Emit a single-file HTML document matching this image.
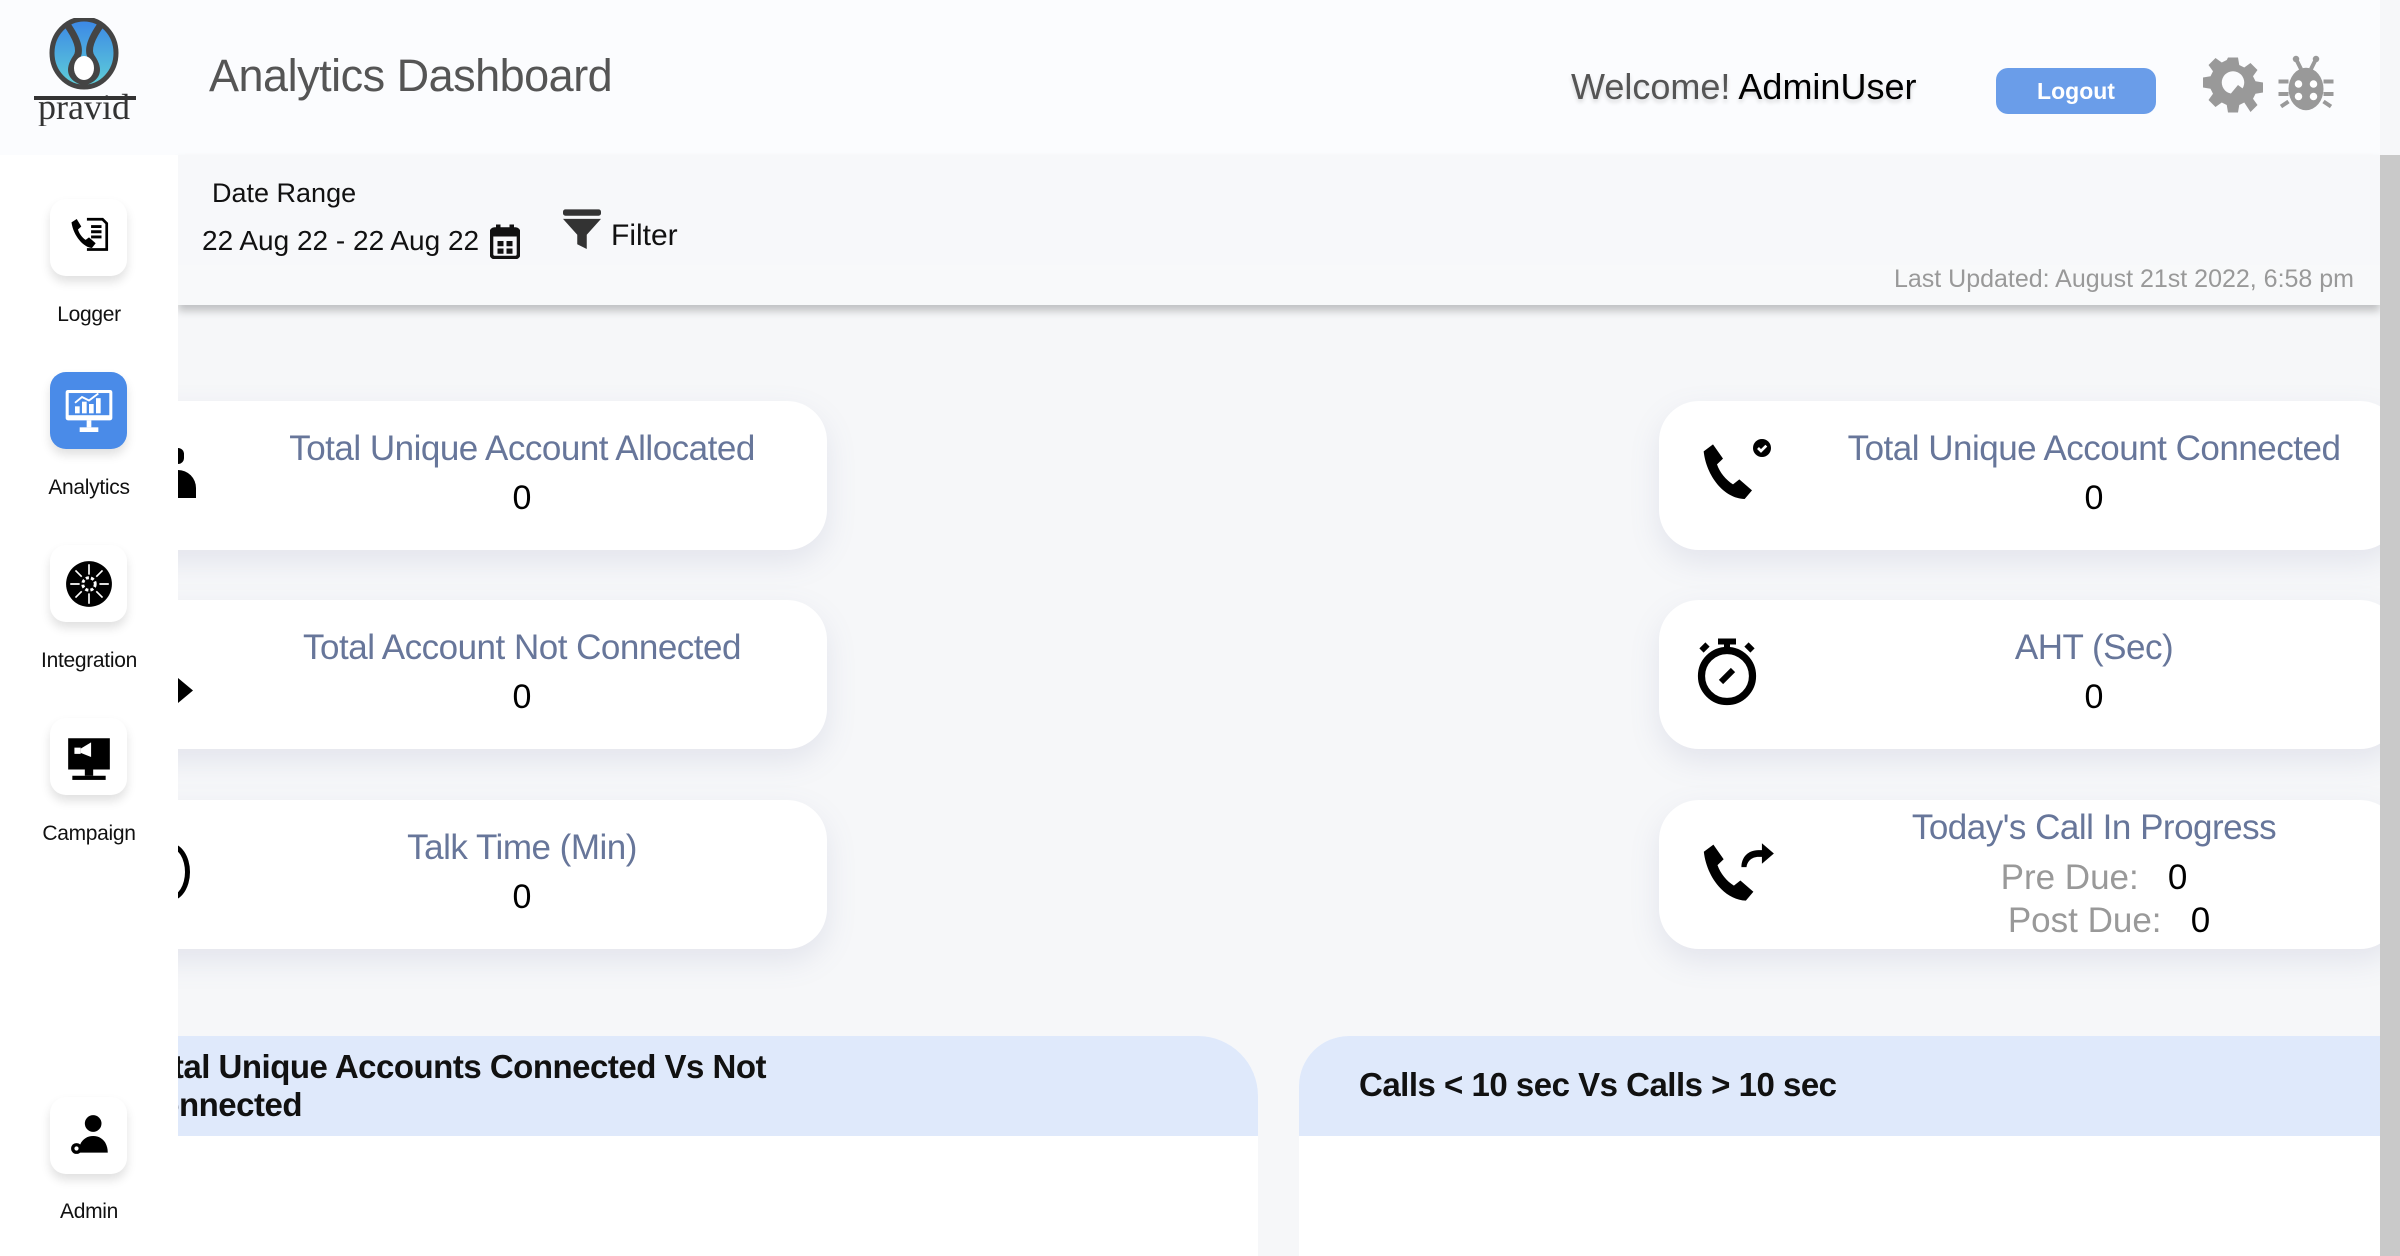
<!DOCTYPE html>
<html style="overflow:hidden"><head><meta charset="utf-8">
<style>
*{box-sizing:border-box;margin:0;padding:0}
html,body{width:2400px;height:1256px;overflow:hidden}
body{background:#f6f7f9;font-family:"Liberation Sans",Arial,sans-serif;position:relative}
.abs{position:absolute}
#hdr{left:0;top:0;width:2380px;height:155px;background:#fbfcfe}
#sb{left:0;top:155px;width:178px;height:1101px;background:#fff;z-index:5}
#scroll{left:2380px;top:155px;width:20px;height:1101px;background:#c9c9c9;z-index:6}
#filt{left:178px;top:155px;width:2202px;height:150px;background:#f8f9fa;box-shadow:0 6px 8px rgba(0,0,0,.22);z-index:3}
.card{background:#fff;border-radius:40px;box-shadow:0 12px 30px rgba(120,130,170,.15);height:149px}
.ct{color:#67769a;font-size:35px;text-align:center;letter-spacing:-.5px}
.cv{color:#000;font-size:34px;text-align:center;margin-top:10px}
.box{left:50px;width:77px;height:77px;border-radius:16px;background:#fff;box-shadow:0 6px 10px rgba(0,0,0,.12);display:flex;align-items:center;justify-content:center}
.lbl{left:0;width:178px;text-align:center;font-size:21px;color:#111;letter-spacing:-.3px}
.panel{background:#fff;border-radius:0 60px 0 0;overflow:hidden}
.ph{background:#dfe9fb;height:100px;font-weight:bold;font-size:33px;color:#111;letter-spacing:-.5px}
</style></head><body>
<div id="hdr" class="abs"></div>
<svg class="abs" style="left:26px;top:18px" width="120" height="108" viewBox="0 0 120 108">
<defs><linearGradient id="g" x1="0" y1="0" x2="0" y2="1"><stop offset="0" stop-color="#3b86e6"/><stop offset="1" stop-color="#5fd0d8"/></linearGradient></defs>
<ellipse cx="58" cy="35" rx="32" ry="34" fill="url(#g)" stroke="#444" stroke-width="5"/>
<path d="M40 5 Q58 30 50 40 Q38 58 58 64 Q78 58 66 40 Q58 30 76 5" fill="none" stroke="#444" stroke-width="7"/>
<ellipse cx="58" cy="50" rx="10" ry="12" fill="#fff"/>
<text x="58" y="101" text-anchor="middle" font-family="Liberation Serif,serif" font-size="36" fill="#333">pravid</text>
<line x1="8" y1="80" x2="110" y2="80" stroke="#333" stroke-width="4"/>
</svg>
<div class="abs" style="left:209px;top:50px;font-size:45px;color:#555;letter-spacing:-.5px">Analytics Dashboard</div>
<div class="abs" style="left:1571px;top:66px;font-size:36px;color:#555;text-shadow:0 3px 4px rgba(0,0,0,.15)">Welcome! <span style="color:#000">AdminUser</span></div>
<div class="abs" style="left:1996px;top:68px;width:160px;height:46px;border-radius:12px;background:#6a9de9;color:#fff;font-weight:bold;font-size:23px;text-align:center;line-height:46px">Logout</div>
<svg class="abs" style="left:2203px;top:55px" width="60" height="60" viewBox="0 0 24 24"><path fill="#999" d="M10 1h4l.5 3 2 1 2.5-1.8 2.8 2.8L20 8.5l1 2 3 .5v4l-3 .5-1 2 1.8 2.5-2.8 2.8L16.5 19l-2 1-.5 3h-4l-.5-3-2-1L5 20.8 2.2 18 4 15.5l-1-2L0 13V9l3-.5 1-2L2.2 4 5 1.2 7.5 3l2-1z"/><circle cx="12" cy="11" r="4.5" fill="#fbfcfe"/><path d="M9 18l5-6 2 1.5-5 6z" fill="#999"/></svg>
<svg class="abs" style="left:2276px;top:54px" width="60" height="60" viewBox="0 0 24 24"><circle cx="8" cy="2" r="1.3" fill="#999"/><circle cx="16" cy="2" r="1.3" fill="#999"/><path d="M8 2l2 4M16 2l-2 4M1 11h4M19 11h4M1 16h4M19 16h4M2 21l3-2M22 21l-3-2" stroke="#999" stroke-width="1.6"/><ellipse cx="12" cy="14" rx="7" ry="8.5" fill="#999"/><circle cx="9" cy="12" r="1.5" fill="#fff"/><circle cx="15" cy="12" r="1.5" fill="#fff"/><circle cx="9" cy="17" r="1.5" fill="#fff"/><circle cx="15" cy="17" r="1.5" fill="#fff"/></svg>

<div id="sb" class="abs"></div>
<div id="scroll" class="abs"></div>
<div id="filt" class="abs">
<div class="abs" style="left:0;top:0;width:2202px;height:110px;background:#f7f8fa"></div>
<div class="abs" style="left:34px;top:23px;font-size:27px;color:#111">Date Range</div>
<div class="abs" style="left:24px;top:70px;font-size:28px;color:#111">22 Aug 22 - 22 Aug 22</div>
<svg class="abs" style="left:312px;top:68px" width="30" height="36" viewBox="0 0 20 24"><rect x="1" y="4" width="18" height="19" rx="2" fill="none" stroke="#111" stroke-width="2.4"/><rect x="1" y="4" width="18" height="5" fill="#111"/><rect x="4" y="1" width="3" height="5" fill="#111"/><rect x="13" y="1" width="3" height="5" fill="#111"/><rect x="5" y="12" width="4" height="3.5" fill="#111"/><rect x="11" y="12" width="4" height="3.5" fill="#111"/><rect x="5" y="17" width="4" height="3.5" fill="#111"/><rect x="11" y="17" width="4" height="3.5" fill="#111"/></svg>
<svg class="abs" style="left:385px;top:54px" width="38" height="42" viewBox="0 0 24 26"><rect x="0" y="0" width="24" height="4" rx="1.5" fill="#333"/><path d="M0 6h24l-9 10v9l-6 -3v-6z" fill="#333"/></svg>
<div class="abs" style="left:433px;top:64px;font-size:30px;color:#111">Filter</div>
<div class="abs" style="right:26px;top:110px;font-size:25px;color:#999">Last Updated: August 21st 2022, 6:58 pm</div>
</div>

<div class="abs box" style="top:199px;z-index:7"><svg width="50" height="50" viewBox="0 0 24 24"><path d="M3.6 4.5l2.5-1.6 2.2 3.6-1.6 1.4c.5 1.8 2 3.9 3.7 5l1.6-1.2 3.2 2.8-1.8 2.3C9.4 16.5 4.5 11 3.6 4.5z" fill="#000"/><path d="M11 3h7.5l2 2v12.5h-9.5" fill="none" stroke="#000" stroke-width="1.3"/><path d="M13 6.5h5M13 9h5M13 11.5h5" stroke="#000" stroke-width="1.4"/></svg></div>
<div class="abs lbl" style="top:303px;z-index:7">Logger</div>
<div class="abs box" style="top:372px;background:#4a8be8;z-index:7"><svg width="56" height="56" viewBox="0 0 24 24"><rect x="2" y="3" width="20" height="13" rx="1" fill="#fff"/><rect x="3.3" y="4.3" width="17.4" height="9.5" fill="#4a8be8"/><rect x="6" y="10" width="2" height="3" fill="#fff"/><rect x="9" y="8" width="2" height="5" fill="#fff"/><rect x="12" y="9" width="2" height="4" fill="#fff"/><rect x="15" y="6.5" width="2" height="6.5" fill="#fff"/><path d="M6 8.5l3-2.5 3 1.5 4-3" stroke="#fff" stroke-width=".8" fill="none"/><rect x="11" y="16" width="2" height="3" fill="#fff"/><rect x="8" y="19" width="8" height="2" fill="#fff"/></svg></div>
<div class="abs lbl" style="top:476px;z-index:7">Analytics</div>
<div class="abs box" style="top:545px;z-index:7"><svg width="50" height="50" viewBox="0 0 24 24"><circle cx="12" cy="12" r="11" fill="#000"/><circle cx="12" cy="12" r="3" fill="none" stroke="#fff" stroke-width="1.4" stroke-dasharray="1.5 1"/><path d="M12 2.5v5M12 16.5v5M3 12h4.5M17 12h4.5M5.5 5.5l3 3M15.5 15.5l3 3M18.5 5.5l-3 3M8.5 15.5l-3 3" stroke="#fff" stroke-width=".8"/></svg></div>
<div class="abs lbl" style="top:649px;z-index:7">Integration</div>
<div class="abs box" style="top:718px;z-index:7"><svg width="50" height="50" viewBox="0 0 24 24"><rect x="2" y="3" width="20" height="15" fill="#000"/><rect x="10" y="18" width="4" height="3" fill="#000"/><rect x="4" y="21" width="16" height="2" fill="#000"/><path d="M8 8l5-3v7l-5-2z" fill="#fff"/><rect x="5" y="7.5" width="3" height="3" fill="#fff"/></svg></div>
<div class="abs lbl" style="top:822px;z-index:7">Campaign</div>
<div class="abs box" style="top:1097px;z-index:7"><svg width="50" height="50" viewBox="0 0 24 24"><circle cx="14" cy="6" r="4" fill="#000"/><path d="M7 20c0-5 3-8 7-8s7 3 7 8z" fill="#000"/><circle cx="6" cy="18" r="2.6" fill="#000"/><circle cx="6" cy="18" r="1" fill="#fff"/></svg></div>
<div class="abs lbl" style="top:1200px;z-index:7">Admin</div>

<div class="abs card" style="left:120px;top:401px;width:707px;padding-top:28px"><div class="ct" style="padding-left:97px">Total Unique Account Allocated</div><div class="cv" style="padding-left:97px">0</div></div>
<div class="abs card" style="left:120px;top:600px;width:707px;padding-top:28px"><div class="ct" style="padding-left:97px">Total Account Not Connected</div><div class="cv" style="padding-left:97px">0</div></div>
<div class="abs card" style="left:120px;top:800px;width:707px;padding-top:28px"><div class="ct" style="padding-left:97px">Talk Time (Min)</div><div class="cv" style="padding-left:97px">0</div></div>
<div class="abs" style="left:178px;top:448px;width:6px;height:16px;background:#000;border-radius:0 8px 8px 0;z-index:4"></div>
<div class="abs" style="left:178px;top:470px;width:18px;height:28px;background:#000;border-radius:0 18px 0 0;z-index:4"></div>
<div class="abs" style="left:178px;top:678px;width:15px;height:25px;background:#000;clip-path:polygon(0 0,100% 50%,0 100%);z-index:4"></div>
<div class="abs" style="left:150px;top:843px;width:40px;height:58px;border:5px solid #000;border-radius:50%;z-index:4"></div>

<div class="abs card" style="left:1659px;top:401px;width:741px;padding-top:28px"><div class="ct" style="width:700px;padding-left:170px">Total Unique Account Connected</div><div class="cv" style="width:700px;padding-left:170px">0</div></div>
<div class="abs card" style="left:1659px;top:600px;width:741px;padding-top:28px"><div class="ct" style="width:700px;padding-left:170px">AHT (Sec)</div><div class="cv" style="width:700px;padding-left:170px">0</div></div>
<div class="abs card" style="left:1659px;top:800px;width:741px;padding-top:8px"><div class="ct" style="width:700px;padding-left:170px">Today's Call In Progress</div>
<div style="width:700px;padding-left:170px;text-align:center;font-size:35px;margin-top:10px"><span style="color:#999">Pre Due:</span>&nbsp;&nbsp; 0</div>
<div style="width:700px;padding-left:200px;text-align:center;font-size:35px;margin-top:3px"><span style="color:#999">Post Due:</span>&nbsp;&nbsp; 0</div></div>
<svg class="abs" style="left:1697px;top:433px" width="80" height="80" viewBox="0 0 24 24"><path d="M2 5.5L4.8 3.4l3 4.3-1.8 1.7c.8 2.4 2.7 4.7 4.8 6l1.9-1.5 3.8 3.3-2.2 2.6C8 19.6 2.8 12.8 2 5.5z" fill="#000"/><circle cx="19.5" cy="4.5" r="2.7" fill="#000"/><path d="M18.3 4.5l.9.9 1.6-1.6" stroke="#fff" stroke-width=".8" fill="none"/></svg>
<svg class="abs" style="left:1694px;top:633px" width="66" height="74" viewBox="0 0 22 24"><circle cx="11" cy="14" r="8.5" fill="none" stroke="#000" stroke-width="2.4"/><rect x="8" y="1.5" width="6" height="2" fill="#000"/><rect x="10" y="3" width="2" height="3" fill="#000"/><path d="M2.5 5.5l2 -2M19.5 5.5l-2-2" stroke="#000" stroke-width="2"/><path d="M9 16l4-4" stroke="#000" stroke-width="2"/></svg>
<svg class="abs" style="left:1697px;top:833px" width="82" height="82" viewBox="0 0 24 24"><path d="M2 5.5L4.8 3.4l3 4.3-1.8 1.7c.8 2.4 2.7 4.7 4.8 6l1.9-1.5 3.8 3.3-2.2 2.6C8 19.6 2.8 12.8 2 5.5z" fill="#000"/><path d="M13 10c0-3 2-5 5-5h1V3l3.5 3-3.5 3V7h-1c-2 0-3.3 1.3-3.5 3z" fill="#000"/></svg>

<div class="abs panel" style="left:120px;top:1036px;width:1138px;height:220px"><div class="ph" style="padding:12px 0 0 16px;line-height:38px">Total Unique Accounts Connected Vs Not<br>Connected</div></div>
<div class="abs panel" style="left:1299px;top:1036px;width:1081px;height:220px;border-radius:50px 0 0 0"><div class="ph" style="padding:30px 0 0 60px">Calls &lt; 10 sec Vs Calls &gt; 10 sec</div></div>
</body></html>
